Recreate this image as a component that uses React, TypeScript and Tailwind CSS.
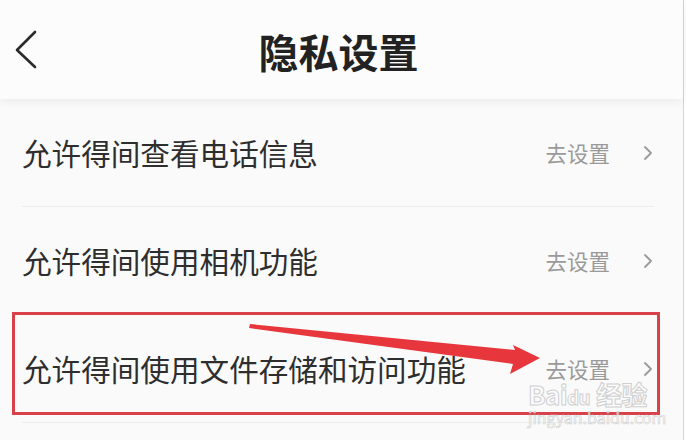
import { ChevronRight } from 'lucide-react'

const rows = [
  '允许得间查看电话信息',
  '允许得间使用相机功能',
  '允许得间使用文件存储和访问功能',
]

export default function App() {
  return (
    <div
      className="relative w-[687px] h-[440px] overflow-hidden bg-white"
      style={{ fontFamily: '"Noto Sans CJK SC", "Noto Sans", sans-serif' }}
    >
      <div className="w-[684px] h-full bg-[#fafafa] border-r border-[#d4d4d4]">
        {/* Header */}
        <div className="relative h-[99px] bg-[#fcfcfc] flex items-center justify-center shadow-[0_3px_8px_rgba(0,0,0,0.06)]">
          <svg className="absolute left-[10px] top-[26px]" width="34" height="48" viewBox="0 0 34 48">
            <polyline points="25,6 7,24 25,41" fill="none" stroke="#2a2a2a" strokeWidth="2.6" strokeLinecap="round" strokeLinejoin="round" />
          </svg>
          <h1 className="text-[40px] font-bold text-[#222] leading-none mt-[2px] -ml-[6px]">隐私设置</h1>
        </div>

        {/* List */}
        <div className="pl-[22px] pr-[29px]">
          {rows.map((label) => (
            <div key={label} className="h-[108px] flex items-center border-b border-[#ececec]">
              <span className="flex-1 text-[29.6px] text-[#2e2e2e] leading-none">{label}</span>
              <span className="text-[21.5px] text-[#9a9a9a] leading-none mr-[26px]">去设置</span>
              <ChevronRight className="w-[24px] h-[24px] text-[#9a9a9a] -mr-[6px]" strokeWidth={1.8} />
            </div>
          ))}
        </div>
      </div>

      {/* Annotation box */}
      <div className="absolute left-[12px] top-[312px] w-[648px] h-[103px] border-[3px] border-[#d8414a]" />

      {/* Arrow */}
      <svg className="absolute left-0 top-0" width="687" height="440">
        <polygon points="250,324 515,350 513,345 540,358 510,374 513,364 249,328" fill="#e8373c" />
      </svg>

      {/* Watermark */}
      <div className="absolute left-[528px] top-[382px] flex flex-col items-start gap-[3px] pointer-events-none">
        <div className="flex items-baseline h-[24px] leading-[24px] text-[26px] font-bold tracking-tight" style={{ WebkitTextStroke: '1px #cfcfcf', color: 'rgba(255,255,255,0.6)' }}>
          <span>Bai</span>
          <span className="text-[19px]">du</span>
          <span className="ml-[6px]">经验</span>
        </div>
        <div className="h-[16px] leading-[16px] text-[16px]" style={{ WebkitTextStroke: '0.6px #cfcfcf', color: 'rgba(255,255,255,0.6)' }}>
          jingyan.baidu.com
        </div>
      </div>
    </div>
  )
}
